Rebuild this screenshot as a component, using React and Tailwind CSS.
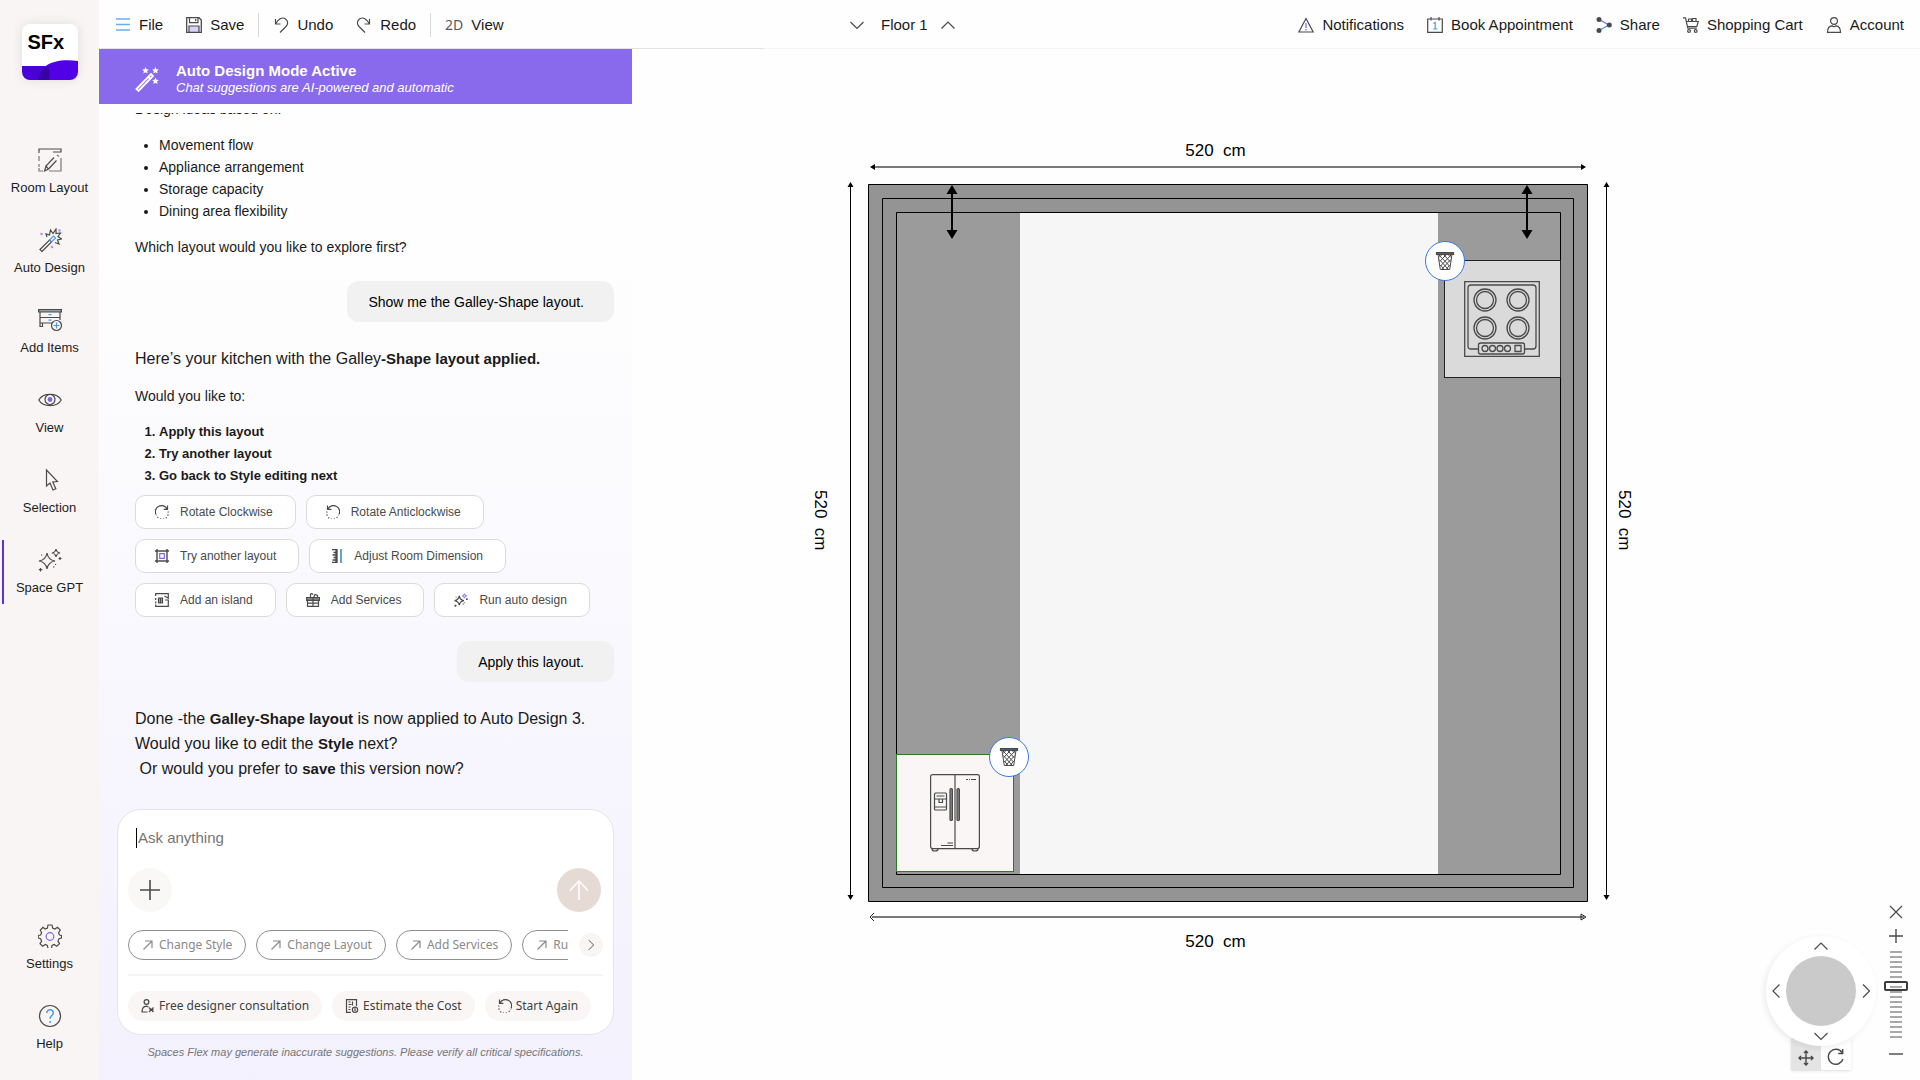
// src/App.jsx
import { useState } from "react";

/* ---------- icons ---------- */

function Icon({ size = 24, box = 24, children, className = "" }) {
  return (
    <svg
      width={size}
      height={size}
      viewBox={`0 0 ${box} ${box}`}
      fill="none"
      stroke="#4a4a4a"
      strokeWidth="1.2"
      className={`shrink-0 ${className}`}
      aria-hidden="true"
    >
      {children}
    </svg>
  );
}

const RoomLayoutIcon = () => (
  <Icon>
    <path d="M1 5V1h22v3h-8" />
    <path d="M1 8v5M1 16v3M1 20v3h4M23 10v13H11M19 7l2 1.5" stroke="#777" />
    <path d="M6.500 23l1.500-5L16 9.500M10.500 21L18.500 12.500M6.500 23l4-2-2.500-3z" />
  </Icon>
);

const WandIcon = () => (
  <Icon>
    <path d="M2 21.500L11.500 12l2 2L4 23.500z" />
    <path d="M11.500 12l4-4 2 2-4 4z" stroke="#4a9be8" />
    <path d="M9 9l-1-3 3.500 1L12.500 2l2.500 3.500L18 1v4.500l4.500-.5-2.500 3.500 3.500 2.500-4 1 1.500 4-4-1.500" />
    <g fill="#c98cf0" stroke="none">
      <circle cx="3.500" cy="6" r="1.300" />
      <circle cx="14" cy="19" r="1.300" />
      <circle cx="21.500" cy="2.500" r="1.300" />
    </g>
  </Icon>
);

const AddItemsIcon = () => (
  <Icon>
    <path d="M.6 1.500h22.800v2.500H.6z" fill="#8fa3ad" />
    <path d="M2 4v14.500h2.500V15H14M2 9.500h20M22 4v8M2 15h12" />
    <path d="M10.500 6.700h3M10.500 12.200h3" stroke="#4a9be8" />
    <circle cx="18.500" cy="17.500" r="5" fill="#f9f5f4" />
    <path d="M18.500 14.500v6M15.500 17.500h6" stroke="#4a9be8" />
  </Icon>
);

const EyeIcon = () => (
  <Icon>
    <path d="M.8 12C5 4.500 19 4.500 23.200 12 19 19.500 5 19.500.8 12z" />
    <circle cx="12" cy="11.500" r="5" />
    <circle cx="12" cy="11.500" r="2.400" fill="#7a68e8" stroke="none" />
  </Icon>
);

const CursorIcon = () => (
  <Icon>
    <path d="M8.500 2v16l3.500-3 3 7 2.800-1.200-3-6.800 4.700-.5z" />
  </Icon>
);

const SparklesIcon = ({ size = 24, accent = "#4a4a4a", weight = 1.2 }) => (
  <Icon size={size}>
    <g strokeWidth={weight}>
      <path d="M9 5c.8 5 3 7.200 8 8-5 .8-7.200 3-8 8-.8-5-3-7.200-8-8 5-.8 7.200-3 8-8z" />
      <path d="M18 1c.4 2.500 1.500 3.600 4 4-2.500.4-3.600 1.500-4 4-.4-2.500-1.500-3.600-4-4 2.500-.4 3.600-1.500 4-4z" stroke={accent} />
      <path d="M22 9v3M20.500 10.500h3M2.500 20v3.500M.8 21.700h3.500M15 19h1.500M17 16.500h1.200M3 7h1.200" />
    </g>
  </Icon>
);

const GearIcon = () => (
  <Icon>
    <path d="M10 1h4l.6 3 2.300 1 2.600-1.700 2.800 2.800L20.600 8.700l.9 2.300 2 .5v2.500l-2.500.8-1 2.300 1.500 2.600-2.800 2.500-2.500-1.700-2.200 1-.6 3.200h-3.400l-.6-3.200-2.200-1-2.600 1.700-2.600-2.600 1.600-2.500-1-2.300-2.400-.8v-2.500l2.400-.5 1-2.300L2.300 6.200 5 3.300 7.200 5l2.200-1z" />
    <circle cx="12" cy="12.500" r="3.800" stroke="#7a68e8" />
  </Icon>
);

const HelpIcon = () => (
  <Icon>
    <circle cx="12" cy="12" r="10.500" />
    <path d="M8.800 9c0-4.500 6.700-4.200 6.500 0-.1 2.600-3.200 2.500-3.200 5.700M12.100 17v2" stroke="#4a9be8" strokeWidth="1.500" />
  </Icon>
);

const MenuIcon = () => (
  <Icon size={16} box={16}>
    <path d="M1 2h14M1 7.500h14M1 13h14" stroke="#6aaef0" strokeWidth="1.500" />
  </Icon>
);

const SaveIcon = () => (
  <Icon size={16} box={16}>
    <path d="M.7.700h12.300l2.300 2.300v12.300H.7z" strokeWidth="1.300" />
    <path d="M3.500.700v5h8.500v-5M9.700 2v2.300" />
    <path d="M3 15.300V9h10v6.300z" fill="#d9d4f7" />
  </Icon>
);

const UndoIcon = ({ flip }) => (
  <Icon size={16} box={16} className={flip ? "-scale-x-100" : ""}>
    <path d="M2.500 2v5h5M2.500 7C5 2 9 -.5 12.500 2c3 2.300 2.500 5.500.5 7.500l-6 6" />
  </Icon>
);

const ChevronIcon = ({ d, size = 16 }) => (
  <Icon size={size} box={16}>
    <path d={d} />
  </Icon>
);
const UP = "M1.500 11.500L8 5l6.500 6.500";
const DOWN = "M1.500 5L8 11.500 14.500 5";
const LEFT = "M11.500 1.500L5 8l6.500 6.500";
const RIGHT = "M5 1.500L11.500 8 5 14.500";

const AlertIcon = () => (
  <Icon size={16} box={16}>
    <path d="M8 1.500L15.200 15H.8z" />
    <path d="M8 6v5M8 12v1.500" stroke="#7a68e8" />
  </Icon>
);

const CalendarIcon = () => (
  <Icon size={16} box={16}>
    <path d="M.7 2h14.600v13.300H.7zM4 0v3.500M12 0v3.500" />
    <path d="M6.500 6.500L8.200 5.500v6.500M6.300 12h4" stroke="#4a9be8" />
  </Icon>
);

const ShareIcon = () => (
  <Icon size={16} box={16}>
    <path d="M3 2.500L13 8" stroke="#7a68e8" />
    <path d="M13 8L3 13.500" stroke="#4a9be8" />
    <g fill="#4a4a4a" stroke="none">
      <circle cx="3" cy="2.500" r="2.500" />
      <circle cx="13.300" cy="8" r="2.500" />
      <circle cx="3" cy="13.500" r="2.500" />
    </g>
  </Icon>
);

const CartIcon = () => (
  <Icon size={16} box={16}>
    <path d="M0 .8h2.500l2.300 10.400h9M3.500 4.500h11.800l-1.500 5H4.500M5.500 4V2h3v2M9.500 4V1.500h3.500V4" />
    <circle cx="6" cy="14" r="1.400" />
    <circle cx="12.700" cy="14" r="1.400" />
  </Icon>
);

const AccountIcon = () => (
  <Icon size={16} box={16}>
    <circle cx="8" cy="4" r="3.400" />
    <path d="M1.500 15.300c0-4 2-6.300 4.500-6.500 1 .8 3 .8 4 0 2.500.2 4.500 2.500 4.500 6.500z" />
  </Icon>
);

const BannerWandIcon = () => (
  <svg width="24" height="26" viewBox="0 0 24 26" fill="none" stroke="#fff" strokeWidth="1.800" aria-hidden="true">
    <path d="M1.500 23L16 8l2 2L3.500 25z" />
    <path d="M13 10.500l2.500 2.500" />
    <g fill="#fff" stroke="none">
      <path id="star" d="M10.500 1l1 2.200 2.400.3-1.800 1.600.5 2.400-2.100-1.200-2.100 1.200.5-2.400L7.100 3.500l2.400-.3z" />
      <use href="#star" x="10" />
      <use href="#star" x="10" y="10.500" />
    </g>
  </svg>
);

const RotateIcon = ({ flip, size = 14 }) => (
  <Icon size={size} box={14} className={flip ? "-scale-x-100" : ""}>
    <path d="M1 9.500A6 6 0 0 1 12 4M12.500.5V4.300H8.700" />
    <path d="M13 6.500A6 6 0 0 1 1.500 10" strokeDasharray="1.200 1.800" />
  </Icon>
);

const LayoutIcon = () => (
  <Icon size={14} box={14}>
    <path d="M0 2h14M0 12h14M2 0v14M12 0v14" strokeWidth="1.400" />
    <path d="M4.700 4.700h4.600v4.600H4.700z" stroke="#7a68e8" />
  </Icon>
);

const RulerIcon = () => (
  <Icon size={14} box={14}>
    <path d="M3 .7h5v12.600H3M7 .7v12.600M4.500 3.500H7M3.500 6H7M4.500 8.500H7M3.500 11H7" strokeWidth="1.300" />
    <path d="M12 0v14" stroke="#2f86c9" strokeWidth="1.500" />
  </Icon>
);

const IslandIcon = () => (
  <Icon size={14} box={14}>
    <path d="M.7 3V.7h12.600v4.500L9.500 3M.7 5v2M.7 8.500v2M.7 11.500v1.800h12.600V7H10" />
    <path d="M3.500 5h4v5h-4z" />
    <path d="M5.500 5v5" strokeWidth="2" />
  </Icon>
);

const ServicesIcon = () => (
  <Icon size={14} box={14}>
    <path d="M.5 4.700h13v2.600H.5z" fill="#9a9a9a" />
    <path d="M1.500 7.300h11v6h-11zM7 5v8.500M1.500 10.200h11" />
    <path d="M4.500 4.500V1.500C5 .3 6.500.5 7 1.700M7.500 4.500L9 1.500l2.500 1v2" />
  </Icon>
);

const DiagonalIcon = () => (
  <Icon size={12} box={12}>
    <path d="M1.500 10.500L10 2M3 2h7v7" stroke="#8a8a8a" />
  </Icon>
);

const DesignerIcon = () => (
  <Icon size={14} box={14}>
    <circle cx="5.500" cy="3" r="2.400" />
    <path d="M6.500 13H1c0-3.500 1.500-5.500 4.500-5.800l2 .8M8 8.500l4.500 4.500M12.500 8.500L8 13M8.500 10.700h4" />
  </Icon>
);

const CostIcon = () => (
  <Icon size={14} box={14}>
    <path d="M6 13.300H1.500V.7h10V7M3.500 3h2M3.500 5.500h3M3.500 8h2M3.500 10.500h2M7.500 2.500v4" />
    <circle cx="10" cy="10.700" r="2.600" />
    <path d="M10 9.300v2.800" />
  </Icon>
);

const TrashIcon = () => (
  <Icon size={20} box={20}>
    <path d="M1.500 1.500h17v2h-17z" fill="#3d6484" />
    <path d="M3 3.500L5.300 18.500h9.400L17 3.500M4 4l10.500 11M9 4l6.500 7M13.500 4l2.500 2.500M4.300 8.500L13 18M5.200 14l3.500 4M16 4L5.500 15M11 4L4.700 10.500M6.500 4L4 6.500M15.800 8.500L7 18M14.800 14L11.500 18" strokeWidth="1" />
  </Icon>
);

/* ---------- left rail ---------- */

const navTop = [
  { label: "Room Layout", icon: <RoomLayoutIcon /> },
  { label: "Auto Design", icon: <WandIcon /> },
  { label: "Add Items", icon: <AddItemsIcon /> },
  { label: "View", icon: <EyeIcon /> },
  { label: "Selection", icon: <CursorIcon /> },
  { label: "Space GPT", icon: <SparklesIcon /> },
];

const navBottom = [
  { label: "Settings", icon: <GearIcon /> },
  { label: "Help", icon: <HelpIcon /> },
];

function NavButton({ item, active, onClick }) {
  return (
    <button
      onClick={onClick}
      className={`ml-0.5 flex h-16 flex-col items-center gap-2 border-l-2 pt-2 pr-1 text-[13px] leading-4 text-[#1c1c1c] ${
        active ? "border-[#5b35d5]" : "border-transparent"
      }`}
    >
      {item.icon}
      {item.label}
    </button>
  );
}

function Logo() {
  return (
    <div className="mx-auto mt-6 flex h-14 w-14 flex-col overflow-hidden rounded-lg bg-white shadow-[0_0_12px_rgba(0,0,0,0.1)]">
      <span className="h-9 pl-1.5 text-xl leading-9 font-bold text-black">SFx</span>
      <svg viewBox="0 0 56 20" className="w-full" aria-hidden="true">
        <path d="M0 6h28v14H0z" fill="#4a00d8" />
        <path d="M16 20C18 6 30-2 56 1v19z" fill="#5200e6" />
        <path d="M16 20c1-6 4-11 10-14 2 4 2 9 1 14z" fill="#3a00a8" />
      </svg>
    </div>
  );
}

function Sidebar() {
  const [active, setActive] = useState("Space GPT");
  return (
    <nav className="flex w-[99px] shrink-0 flex-col bg-[#f9f5f4]">
      <Logo />
      <div className="mt-15 flex flex-col gap-4">
        {navTop.map((item) => (
          <NavButton
            key={item.label}
            item={item}
            active={active === item.label}
            onClick={() => setActive(item.label)}
          />
        ))}
      </div>
      <div className="mt-auto mb-5 flex flex-col gap-4">
        {navBottom.map((item) => (
          <NavButton key={item.label} item={item} />
        ))}
      </div>
    </nav>
  );
}

/* ---------- top bar ---------- */

function ToolButton({ icon, children }) {
  return (
    <button className="flex items-center gap-2 whitespace-nowrap">
      {icon}
      {children}
    </button>
  );
}

function TopBar() {
  return (
    <header className="flex h-[49px] shrink-0 border-b border-[#f3f3f3] text-[15px] text-[#1a1a1a]">
      <div className="-mb-px flex w-[665px] items-center border-b border-[#e2e2e2] pt-0.5 pl-4">
        <ToolButton icon={<MenuIcon />}>File</ToolButton>
        <span className="w-[23px]" />
        <ToolButton icon={<SaveIcon />}>Save</ToolButton>
        <span className="mx-[14px] h-6 w-px bg-[#d8d8d8]" />
        <ToolButton icon={<UndoIcon />}>Undo</ToolButton>
        <span className="w-[23px]" />
        <ToolButton icon={<UndoIcon flip />}>Redo</ToolButton>
        <span className="mx-[14px] h-6 w-px bg-[#d8d8d8]" />
        <ToolButton icon={<span className="font-['Noto_Sans',sans-serif] text-sm text-[#5a5a5a]">2D</span>}>
          View
        </ToolButton>
      </div>
      <div className="ml-[85px] flex items-center gap-4 pt-0.5">
        <button aria-label="Floor down">
          <ChevronIcon d={DOWN} />
        </button>
        <span className="whitespace-nowrap">Floor 1</span>
        <button aria-label="Floor up" className="-ml-1">
          <ChevronIcon d={UP} />
        </button>
      </div>
      <div className="ml-auto flex items-center gap-[23px] pt-0.5 pr-4">
        <ToolButton icon={<AlertIcon />}>Notifications</ToolButton>
        <ToolButton icon={<CalendarIcon />}>Book Appointment</ToolButton>
        <ToolButton icon={<ShareIcon />}>Share</ToolButton>
        <ToolButton icon={<CartIcon />}>Shopping Cart</ToolButton>
        <ToolButton icon={<AccountIcon />}>Account</ToolButton>
      </div>
    </header>
  );
}

/* ---------- chat panel ---------- */

function Bubble({ children }) {
  return (
    <p className="mr-[18px] ml-auto w-fit rounded-xl bg-[#f1f1f1] pt-[11px] pr-[30px] pb-[9px] pl-[21px] leading-[21px] text-black">
      {children}
    </p>
  );
}

const actionRows = [
  [
    { label: "Rotate Clockwise", icon: <RotateIcon /> },
    { label: "Rotate Anticlockwise", icon: <RotateIcon flip /> },
  ],
  [
    { label: "Try another layout", icon: <LayoutIcon /> },
    { label: "Adjust Room Dimension", icon: <RulerIcon /> },
  ],
  [
    { label: "Add an island", icon: <IslandIcon /> },
    { label: "Add Services", icon: <ServicesIcon /> },
    { label: "Run auto design", icon: <SparklesIcon size={14} accent="#9b8bf0" weight={2} /> },
  ],
];

function Messages() {
  return (
    <div className="mt-[9px] flex min-h-0 flex-1 flex-col justify-end overflow-hidden pl-9 text-sm leading-[22px] text-[#1a1a1a]">
      <p>Design ideas based on:</p>
      <ul className="mt-[14px] list-disc pl-6">
        <li>Movement flow</li>
        <li>Appliance arrangement</li>
        <li>Storage capacity</li>
        <li>Dining area flexibility</li>
      </ul>
      <p className="mt-[14px] mb-[23px]">Which layout would you like to explore first?</p>
      <Bubble>Show me the Galley-Shape layout.</Bubble>

      <p className="mt-6 text-base leading-[25px]">
        Here’s your kitchen with the Galley<b className="text-[15px]">-Shape layout applied.</b>
      </p>
      <p className="mt-[14px]">Would you like to:</p>
      <ol className="mt-[14px] list-decimal pl-6 text-[13px] font-bold">
        <li>Apply this layout</li>
        <li>Try another layout</li>
        <li>Go back to Style editing next</li>
      </ol>
      <div className="mt-2 mb-6 flex flex-col gap-[10px]">
        {actionRows.map((row, i) => (
          <div key={i} className="flex gap-[10px]">
            {row.map((a) => (
              <button
                key={a.label}
                className="flex h-[34px] items-center gap-[11px] rounded-[10px] border border-[#dcd9d9] bg-white pr-[22px] pl-[19px] text-xs whitespace-nowrap text-[#4a4a4a]"
              >
                {a.icon}
                {a.label}
              </button>
            ))}
          </div>
        ))}
      </div>
      <Bubble>Apply this layout.</Bubble>

      <p className="mt-6 mb-7 text-base leading-[25px] whitespace-pre">
        Done -the <b className="text-[15px]">Galley-Shape layout</b> is now applied to Auto Design 3.
        <br />
        Would you like to edit the <b className="text-[15px]">Style</b> next?
        <br />
        {" "}Or would you prefer to <b className="text-[15px]">save</b> this version now?
      </p>
    </div>
  );
}

function Composer() {
  const [text, setText] = useState("");
  return (
    <div className="mx-[18px] rounded-3xl border border-[#e6e4ea] bg-white px-[10px] pt-[18px] pb-[13px]">
      <div className="flex items-center pl-2">
        <span className="h-5 w-px bg-black" />
        <input
          type="text"
          aria-label="Ask anything"
          placeholder="Ask anything"
          value={text}
          onChange={(e) => setText(e.target.value)}
          className="h-5 flex-1 pl-px text-[15px] leading-5 text-[#1a1a1a] outline-none placeholder:text-[#757575]"
        />
      </div>
      <div className="mt-5 flex items-center justify-between pr-0.5">
        <button aria-label="Attach" className="flex h-11 w-11 items-center justify-center rounded-full bg-[#f9f8f7]">
          <Icon size={20} box={20}>
            <path d="M10 0v20M0 10h20" strokeWidth="1.600" />
          </Icon>
        </button>
        <button aria-label="Send" className="flex h-11 w-11 items-center justify-center rounded-full bg-[#e5dad4]">
          <Icon size={20} box={20}>
            <path d="M10 20V1M1 10.500L10 1l9 9.500" stroke="#fff" strokeWidth="1.500" />
          </Icon>
        </button>
      </div>
      <div className="mt-[18px] flex items-center justify-between font-['Noto_Sans',sans-serif]">
        <div className="flex w-[440px] gap-[10px] overflow-hidden">
          {["Change Style", "Change Layout", "Add Services", "Run auto design"].map((label) => (
            <button
              key={label}
              className="flex h-[30px] shrink-0 items-center gap-[5px] rounded-full border border-[#8f8f8f] px-[13px] text-xs whitespace-nowrap text-[#8a8a8a]"
            >
              <DiagonalIcon />
              {label}
            </button>
          ))}
        </div>
        <button aria-label="More suggestions" className="flex h-6 w-6 items-center justify-center rounded-full bg-[#f8f6f5]">
          <ChevronIcon d={RIGHT} size={12} />
        </button>
      </div>
      <hr className="mt-[14px] border-t-2 border-[#f4f4f4]" />
      <div className="mt-[15px] flex gap-[10px] font-['Noto_Sans',sans-serif] text-xs whitespace-nowrap text-[#404040]">
        <button className="flex h-[30px] items-center gap-1 rounded-full bg-[#f9f6f5] px-[13px]">
          <DesignerIcon />
          Free designer consultation
        </button>
        <button className="flex h-[30px] items-center gap-1 rounded-full bg-[#f9f6f5] px-[13px]">
          <CostIcon />
          Estimate the Cost
        </button>
        <button className="flex h-[30px] items-center gap-1 rounded-full bg-[#f9f6f5] px-[13px]">
          <RotateIcon flip />
          Start Again
        </button>
      </div>
    </div>
  );
}

function ChatPanel() {
  return (
    <section className="flex w-[533px] shrink-0 flex-col bg-linear-to-b from-[#fefefe] from-20% to-[#f3f1fd]">
      <div className="flex h-[55px] shrink-0 items-center gap-[17px] bg-[#8969ec] pt-1 pl-9 text-white">
        <BannerWandIcon />
        <div>
          <h2 className="text-[15px] leading-[18px] font-bold">Auto Design Mode Active</h2>
          <p className="text-[13px] leading-4 italic">Chat suggestions are AI-powered and automatic</p>
        </div>
      </div>
      <Messages />
      <Composer />
      <p className="mt-[9px] mb-5 text-center text-[11px] leading-4 text-[#757575] italic">
        Spaces Flex may generate inaccurate suggestions. Please verify all critical specifications.
      </p>
    </section>
  );
}

/* ---------- floor plan ---------- */

function HorizontalArrow({ open }) {
  return (
    <svg width="718" height="10" viewBox="0 0 718 10" aria-hidden="true">
      <path d="M3 5h712" stroke="#7a7a7a" strokeWidth="2" />
      {open ? (
        <path d="M5 1L1 5l4 4M717 5l-5-3v6z" fill="none" stroke="#222" />
      ) : (
        <path d="M1 5l5-3v6zM717 5l-5-3v6z" />
      )}
    </svg>
  );
}

function VerticalArrow() {
  return (
    <svg width="8" height="718" viewBox="0 0 8 718" aria-hidden="true">
      <path d="M4.500 3v712" stroke="#000" />
      <path d="M4.500 0l3 5h-6zM4.500 718l3-5h-6z" />
    </svg>
  );
}

function WallArrow({ x }) {
  return (
    <g fill="#000">
      <path d={`M${x} 6v44`} stroke="#000" strokeWidth="2" />
      <path d={`M${x} 1l5.500 9h-11zM${x} 55l5.500-9h-11z`} />
    </g>
  );
}

function Stove() {
  return (
    <svg width="76" height="76" viewBox="0 0 76 76" fill="none" stroke="#4a4a4a" strokeWidth="1.300" aria-hidden="true">
      <path d="M.7.700h74.600v74.600H.7z" />
      <path d="M14 68H7q-3 0-3-3V7q0-3 3-3h62q3 0 3 3v58q0 3-3 3h-8" />
      {[[21, 19], [54, 19], [21, 47], [54, 47]].map(([cx, cy]) => (
        <g key={`${cx}-${cy}`}>
          <circle cx={cx} cy={cy} r="11" />
          <circle cx={cx} cy={cy} r="8.500" />
        </g>
      ))}
      <rect x="14.500" y="62" width="46" height="11" rx="2" />
      {[21, 28.5, 36, 43.5].map((cx) => (
        <circle key={cx} cx={cx} cy="67.500" r="3" />
      ))}
      <path d="M51 64.500h6v6h-6z" />
    </svg>
  );
}

function Fridge() {
  return (
    <svg width="50" height="78" viewBox="0 0 50 78" fill="none" stroke="#4a4a4a" strokeWidth="1.200" aria-hidden="true">
      <rect x=".6" y=".6" width="48.800" height="74" rx="2" />
      <path d="M25 1v73.500" />
      <rect x="20" y="14.500" width="2.400" height="32" rx="1" fill="#888" />
      <rect x="27" y="14.500" width="2.400" height="32" rx="1" fill="#888" />
      <rect x="4.500" y="19" width="12" height="17" rx="1" />
      <path d="M4.500 25h12M4.500 33h12M9 25v3.500h3.500V25M6.500 22h8" />
      <path d="M36 5.500h2M39 5.500h1M41 5.500h5M11 71.500h12M17.500 69h5.500" />
      <path d="M2 75q0 2 3 2t3-2M42 75q0 2 3 2t3-2" />
    </svg>
  );
}

function DeleteButton({ label, className }) {
  return (
    <button
      aria-label={label}
      className={`absolute flex h-10 w-10 items-center justify-center rounded-full border border-[#3478e8] bg-white ${className}`}
    >
      <TrashIcon />
    </button>
  );
}

function FloorPlan() {
  return (
    <div className="flex flex-col items-center text-[17px] leading-6 whitespace-pre text-black">
      <span className="mr-6 -mb-px">{"520  cm"}</span>
      <HorizontalArrow />
      <div className="my-[10px] flex items-start gap-[14px]">
        <span className="mb-11 self-center [writing-mode:vertical-rl]">{"520  cm"}</span>
        <VerticalArrow />
        <div className="relative mt-0.5 h-[718px] w-[720px]">
          <svg width="720" height="718" viewBox="0 0 720 718" aria-hidden="true">
            <path d="M0 0h720v718H0z" fill="#949494" />
            <path d="M29 29h663v662H29z" fill="#9b9b9b" />
            <path d="M152 29h418v662H152z" fill="#f6f6f6" />
            <g fill="none" stroke="#000">
              <path d="M.5.500h719v717H.5z" />
              <path d="M14.500 14.500h691v689h-691z" />
              <path d="M28.500 28.500h664v662h-664z" />
            </g>
            <WallArrow x={84} />
            <WallArrow x={659} />
          </svg>
          <div className="absolute top-[76px] left-[576px] flex h-[118px] w-[117px] items-center justify-center border border-[#222] bg-[#dadada]">
            <Stove />
            <DeleteButton label="Remove stove" className="-top-5 -left-5" />
          </div>
          <div className="absolute top-[570px] left-[28px] flex h-[118px] w-[118px] items-center justify-center border border-[#2a7a2a] bg-[#f9f6f5]">
            <Fridge />
            <DeleteButton label="Remove fridge" className="-top-[18px] -right-4" />
          </div>
        </div>
        <VerticalArrow />
        <span className="mr-3 mb-11 -ml-3 self-center [writing-mode:vertical-rl]">{"520  cm"}</span>
      </div>
      <HorizontalArrow open />
      <span className="mt-2 mr-6">{"520  cm"}</span>
    </div>
  );
}

/* ---------- camera controls ---------- */

function CameraPad() {
  return (
    <div className="flex flex-col items-center">
      <div className="z-10 grid h-[110px] w-[110px] grid-cols-[20px_70px_20px] grid-rows-[20px_70px_20px] place-items-center rounded-full bg-white shadow-[-2px_2px_6px_rgba(0,0,0,0.08)]">
        <button aria-label="Pan up" className="col-start-2 row-start-1">
          <ChevronIcon d={UP} />
        </button>
        <button aria-label="Pan left" className="col-start-1 row-start-2">
          <ChevronIcon d={LEFT} />
        </button>
        <span className="col-start-2 row-start-2 h-[70px] w-[70px] rounded-full bg-[#cacaca]" />
        <button aria-label="Pan right" className="col-start-3 row-start-2">
          <ChevronIcon d={RIGHT} />
        </button>
        <button aria-label="Pan down" className="col-start-2 row-start-3">
          <ChevronIcon d={DOWN} />
        </button>
      </div>
      <div className="-mt-2 flex bg-white shadow-sm">
        <button aria-label="Move" className="flex h-8 w-[30px] items-end justify-center bg-[#e4e4e4] pb-1">
          <Icon size={16} box={16}>
            <path d="M8 1v14M1 8h14M6 3l2-2 2 2M6 13l2 2 2-2M3 6L1 8l2 2M13 6l2 2-2 2" strokeWidth="1.400" />
          </Icon>
        </button>
        <button aria-label="Rotate" className="flex h-8 w-[30px] items-end justify-center pb-1">
          <Icon size={18} box={18}>
            <path d="M16 11A7.500 7.500 0 1 1 15 4.500M15.700 1v4.500h-4.500" strokeWidth="1.400" />
          </Icon>
        </button>
      </div>
    </div>
  );
}

function ZoomControl() {
  const [zoom, setZoom] = useState(61);
  return (
    <div className="mb-2 flex w-6 flex-col items-center">
      <button aria-label="Close controls">
        <Icon size={16} box={16}>
          <path d="M2 2l12 12M14 2L2 14" />
        </Icon>
      </button>
      <button aria-label="Zoom in" className="mt-2">
        <Icon size={16} box={16}>
          <path d="M8 1v14M1 8h14" strokeWidth="1.400" />
        </Icon>
      </button>
      <input
        type="range"
        aria-label="Zoom"
        min="0"
        max="100"
        value={zoom}
        onChange={(e) => setZoom(Number(e.target.value))}
        className="mt-[7px] mb-2 h-[87px] w-6 appearance-none bg-[repeating-linear-gradient(#a8a8a8_0_2px,transparent_2px_5px)] bg-[length:12px_100%] bg-center bg-no-repeat [direction:rtl] [writing-mode:vertical-lr] [&::-webkit-slider-thumb]:h-[10px] [&::-webkit-slider-thumb]:w-6 [&::-webkit-slider-thumb]:appearance-none [&::-webkit-slider-thumb]:rounded-xs [&::-webkit-slider-thumb]:border-2 [&::-webkit-slider-thumb]:border-[#3c3c3c]"
      />
      <button aria-label="Zoom out">
        <Icon size={16} box={16}>
          <path d="M1 8h14" strokeWidth="1.400" />
        </Icon>
      </button>
    </div>
  );
}

function Canvas() {
  return (
    <main className="relative flex flex-1 items-start justify-center bg-[#fefefe] pt-[90px] pr-[97px]">
      <FloorPlan />
      <div className="absolute right-3 bottom-[10px] flex items-end gap-2">
        <CameraPad />
        <ZoomControl />
      </div>
    </main>
  );
}

export default function App() {
  return (
    <div className="flex h-screen overflow-hidden bg-[#fefefe] font-['Liberation_Sans',Arial,sans-serif]">
      <Sidebar />
      <div className="flex min-w-0 flex-1 flex-col">
        <TopBar />
        <div className="flex min-h-0 flex-1">
          <ChatPanel />
          <Canvas />
        </div>
      </div>
    </div>
  );
}
